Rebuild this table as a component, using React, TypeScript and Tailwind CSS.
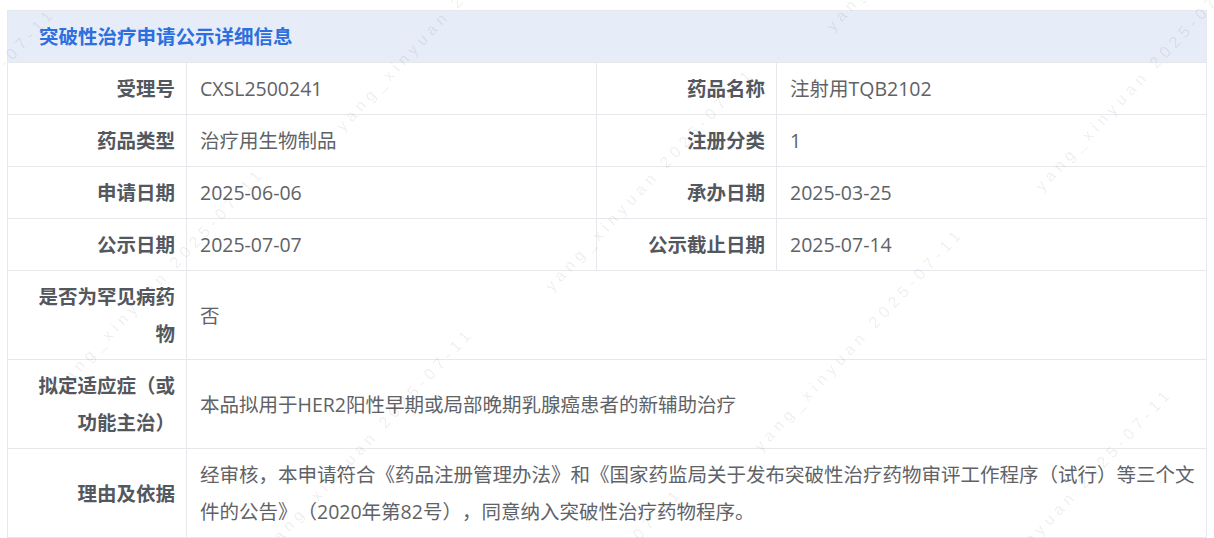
import React from 'react';

const FONT = '"Open Sans", "Noto Sans CJK SC", sans-serif';

type Row =
  | { kind: 'pair'; l1: string; v1: string; l2: string; v2: string }
  | { kind: 'wide'; label: React.ReactNode; value: string };

const rows: Row[] = [
  { kind: 'pair', l1: '受理号', v1: 'CXSL2500241', l2: '药品名称', v2: '注射用TQB2102' },
  { kind: 'pair', l1: '药品类型', v1: '治疗用生物制品', l2: '注册分类', v2: '1' },
  { kind: 'pair', l1: '申请日期', v1: '2025-06-06', l2: '承办日期', v2: '2025-03-25' },
  { kind: 'pair', l1: '公示日期', v1: '2025-07-07', l2: '公示截止日期', v2: '2025-07-14' },
  { kind: 'wide', label: '是否为罕见病药物', value: '否' },
  { kind: 'wide', label: '拟定适应症（或功能主治）', value: '本品拟用于HER2阳性早期或局部晚期乳腺癌患者的新辅助治疗' },
  {
    kind: 'wide',
    label: '理由及依据',
    value:
      '经审核，本申请符合《药品注册管理办法》和《国家药监局关于发布突破性治疗药物审评工作程序（试行）等三个文件的公告》（2020年第82号），同意纳入突破性治疗药物程序。',
  },
];

// watermark lattice
const origin = { x: 67, y: 397 };
const marks: { x: number; y: number }[] = [];
for (let i = -2; i <= 3; i++) {
  for (let j = -3; j <= 3; j++) {
    const x = origin.x + i * 490 + j * 209;
    const y = origin.y - i * 100 + j * 160;
    if (x > -320 && x < 1214 && y > 0 && y < 800) marks.push({ x, y });
  }
}

function Label({ children }: { children: React.ReactNode }) {
  return (
    <div className="flex items-center justify-end text-right pl-5 pr-[11px] py-[7px] leading-[37px] font-bold text-[#53575e]">
      {children}
    </div>
  );
}

function Value({ children, wide = false }: { children: React.ReactNode; wide?: boolean }) {
  return (
    <div
      className={
        'flex items-center border-l border-[#e6e8ec] pl-[13px] pr-[10px] py-[7px] leading-[37px] text-[#606266] ' +
        (wide ? 'col-span-3' : '')
      }
    >
      {children}
    </div>
  );
}

export default function App() {
  return (
    <div
      className="relative w-[1214px] h-[538px] overflow-hidden bg-white [text-spacing-trim:space-all]"
      style={{ fontFamily: FONT }}
    >
      <div className="ml-[7px] mt-[10px] w-[1200px] border border-[#e6e8ec] text-[19.5px]">
        <div className="bg-[#e6ecf8] pl-[31px] py-[7px] leading-[37px] font-bold text-[#2d6fdd]">
          突破性治疗申请公示详细信息
        </div>
        {rows.map((r, idx) => (
          <div key={idx} className="grid grid-cols-[178px_410px_180px_430px] border-t border-[#e6e8ec]">
            {r.kind === 'pair' ? (
              <>
                <Label>{r.l1}</Label>
                <Value>{r.v1}</Value>
                <div className="border-l border-[#e6e8ec] flex justify-end">
                  <Label>{r.l2}</Label>
                </div>
                <Value>{r.v2}</Value>
              </>
            ) : (
              <>
                <Label>{r.label}</Label>
                <Value wide>{r.value}</Value>
              </>
            )}
          </div>
        ))}
      </div>

      <div className="pointer-events-none absolute inset-0">
        {marks.map((m, k) => (
          <div key={k} className="absolute w-0 h-0" style={{ left: m.x, top: m.y }}>
            <span
              className="absolute left-0 bottom-0 origin-bottom-left -rotate-[47deg] whitespace-nowrap text-[16px] tracking-[5px] text-black/[0.08]"
              style={{ fontFamily: '"Liberation Sans", sans-serif' }}
            >
              yang_xinyuan 2025-07-11
            </span>
          </div>
        ))}
      </div>
    </div>
  );
}
